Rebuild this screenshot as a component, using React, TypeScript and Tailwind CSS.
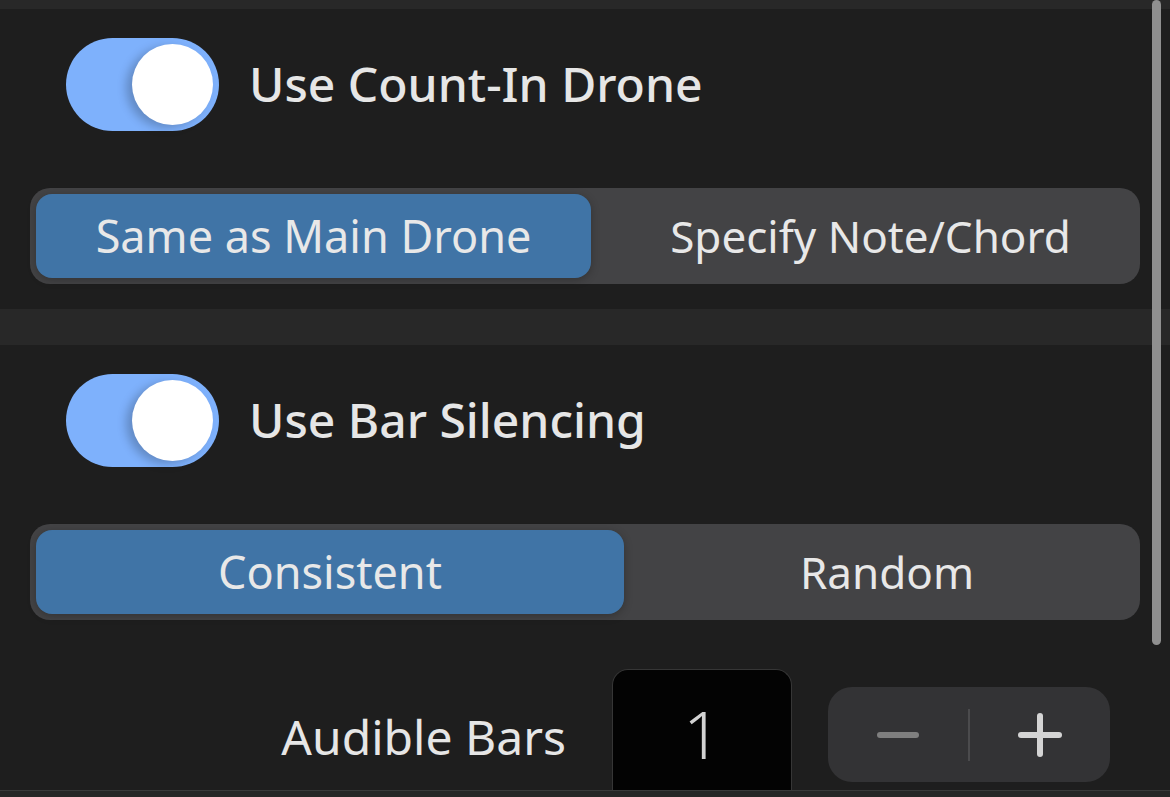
import React, { useState } from 'react';

const Toggle: React.FC<{ on: boolean; onChange: () => void }> = ({ on, onChange }) => (
  <button
    onClick={onChange}
    className={`relative w-[153px] h-[93px] rounded-full shrink-0 ${on ? 'bg-[#7eb1fc]' : 'bg-[#3a3a3c]'}`}
  >
    <span
      className={`absolute top-[6px] w-[81px] h-[81px] rounded-full bg-white shadow-[-6px_3px_10px_rgba(0,0,0,0.22)] ${on ? 'right-[6px]' : 'left-[6px]'}`}
    />
  </button>
);

interface SegmentedProps {
  options: string[];
  selected: number;
  firstWidth: string;
  onSelect: (i: number) => void;
}

const Segmented: React.FC<SegmentedProps> = ({ options, selected, firstWidth, onSelect }) => (
  <div className="mx-[30px] h-[96px] p-[6px] rounded-[20px] bg-[#434345] flex">
    {options.map((opt, i) => (
      <button
        key={opt}
        onClick={() => onSelect(i)}
        className={`h-full rounded-[16px] text-[#e8e8e8] flex items-center justify-center ${
          i === 0 ? `${firstWidth} shrink-0 text-[45px]` : 'flex-1 pl-[16px] text-[44px]'
        } ${selected === i ? 'bg-[#4074a6] shadow-[0_2px_8px_rgba(0,0,0,0.25)]' : ''}`}
      >
        {opt}
      </button>
    ))}
  </div>
);

export default function App() {
  const [countIn, setCountIn] = useState(true);
  const [silencing, setSilencing] = useState(true);
  const [droneMode, setDroneMode] = useState(0);
  const [silenceMode, setSilenceMode] = useState(0);
  const [bars, setBars] = useState(1);

  return (
    <div
      className="relative w-[1170px] h-[797px] overflow-hidden bg-[#1e1e1e] text-[#e6e6e6]"
      style={{ fontFamily: '"Noto Sans", "Open Sans", sans-serif' }}
    >
      <div className="h-[9px] bg-[#282828]" />

      <div className="mt-[29px] pl-[66px] flex items-center gap-[30px] h-[93px]">
        <Toggle on={countIn} onChange={() => setCountIn(!countIn)} />
        <span className="text-[48px] font-medium pb-[2px]">Use Count-In Drone</span>
      </div>

      <div className="mt-[57px]">
        <Segmented
          options={['Same as Main Drone', 'Specify Note/Chord']}
          selected={droneMode}
          firstWidth="w-[555px]"
          onSelect={setDroneMode}
        />
      </div>

      <div className="mt-[25px] h-[36px] bg-[#282828]" />

      <div className="mt-[29px] pl-[66px] flex items-center gap-[30px] h-[93px]">
        <Toggle on={silencing} onChange={() => setSilencing(!silencing)} />
        <span className="text-[48px] font-medium pb-[2px]">Use Bar Silencing</span>
      </div>

      <div className="mt-[57px]">
        <Segmented
          options={['Consistent', 'Random']}
          selected={silenceMode}
          firstWidth="w-[588px]"
          onSelect={setSilenceMode}
        />
      </div>

      <div className="mt-[49px] h-[121px] flex items-start">
        <span className="w-[566px] mt-[36px] text-right text-[48px] text-[#e6e6e6] leading-[64px]">
          Audible Bars
        </span>
        <div className="ml-[46px] w-[180px] h-[121px] bg-[#030303] border border-b-0 border-[#363636] rounded-t-[16px] flex items-center justify-center">
          <span className="text-[66px] font-light text-[#d2d2d2] leading-none pt-[6px]">{bars}</span>
        </div>
        <div className="ml-[36px] mt-[18px] w-[282px] h-[95px] rounded-[24px] bg-[#333335] flex items-center">
          <button onClick={() => setBars(Math.max(1, bars - 1))} className="flex-1 h-full flex items-center justify-center">
            <svg width="44" height="8" viewBox="0 0 44 8">
              <line x1="4" y1="4" x2="40" y2="4" stroke="#7f7f7f" strokeWidth="6" strokeLinecap="round" />
            </svg>
          </button>
          <div className="w-[2px] h-[52px] bg-[#4b4b4d]" />
          <button onClick={() => setBars(bars + 1)} className="flex-1 h-full flex items-center justify-center">
            <svg width="46" height="46" viewBox="0 0 46 46">
              <line x1="4" y1="23" x2="42" y2="23" stroke="#d4d4d4" strokeWidth="6" strokeLinecap="round" />
              <line x1="23" y1="4" x2="23" y2="42" stroke="#d4d4d4" strokeWidth="6" strokeLinecap="round" />
            </svg>
          </button>
        </div>
      </div>

      <div className="h-[1px] bg-[#3a3a3a]" />
      <div className="h-[6px] bg-[#262626]" />

      <div className="absolute left-[1152px] top-0 w-[9px] h-[645px] rounded-full bg-[#8f8f8f]" />
    </div>
  );
}
